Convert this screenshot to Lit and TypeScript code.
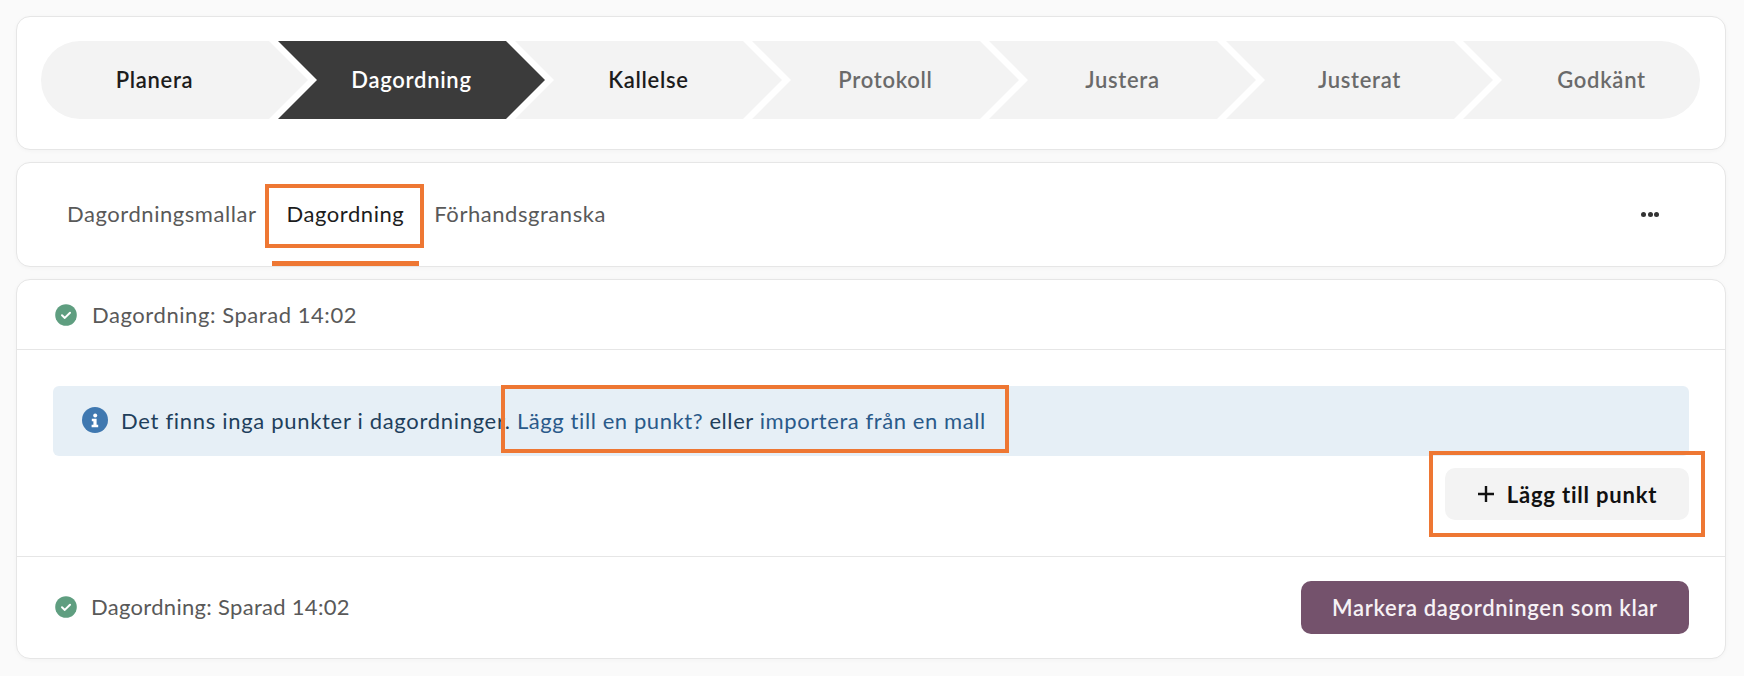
import { LitElement, html, css, svg } from "lit";
import { customElement } from "lit/decorators.js";
import { classMap } from "lit/directives/class-map.js";

const STEPS = [
  { label: "Planera", state: "done" },
  { label: "Dagordning", state: "active" },
  { label: "Kallelse", state: "done" },
  { label: "Protokoll", state: "todo" },
  { label: "Justera", state: "todo" },
  { label: "Justerat", state: "todo" },
  { label: "Godkänt", state: "todo" },
];

const checkIcon = svg`<svg class="check" viewBox="0 0 22 22" aria-hidden="true"><circle cx="11" cy="11" r="10.8" fill="#5f9e80"/><path d="M7 11.3l2.8 2.6 5.2-5.2" fill="none" stroke="#fff" stroke-width="2" stroke-linecap="round" stroke-linejoin="round"/></svg>`;

@customElement("app-root")
export class AppRoot extends LitElement {
  static styles = css`
    :host {
      display: flex;
      flex-direction: column;
      gap: 12px;
      box-sizing: border-box;
      width: 1744px;
      height: 676px;
      padding: 16px 18px 0 16px;
      background: #fafafa;
      font-family: "Lato", "Liberation Sans", sans-serif;
      font-size: 22px;
      color: #595959;
    }
    .card {
      box-sizing: border-box;
      flex: none;
      background: #fff;
      border: 1px solid #e6e6e6;
      border-radius: 14px;
      box-shadow: 0 1px 4px rgba(0, 0, 0, 0.03);
    }
    .steps-card {
      height: 134px;
      padding: 24px 25px 0 24px;
    }
    .steps {
      display: flex;
      height: 78px;
      border-radius: 39px;
      overflow: hidden;
    }
    .step {
      box-sizing: border-box;
      flex: 0 0 267px;
      margin-left: -30px;
      display: flex;
      align-items: center;
      justify-content: center;
      padding-bottom: 1px;
      background: #f3f3f3;
      font-weight: 600;
      letter-spacing: 0.7px;
      clip-path: polygon(0 0, calc(100% - 39px) 0, 100% 50%, calc(100% - 39px) 100%, 0 100%, 39px 50%);
    }
    .step:first-child {
      margin-left: 0;
      padding-right: 40px;
      clip-path: polygon(0 0, calc(100% - 39px) 0, 100% 50%, calc(100% - 39px) 100%, 0 100%);
    }
    .step:last-child {
      flex-basis: 237px;
      padding-left: 40px;
      clip-path: polygon(0 0, 100% 0, 100% 100%, 0 100%, 39px 50%);
    }
    .done { color: #1c1c1c; }
    .todo { color: #6a6a6a; }
    .active { background: #3b3b3b; color: #fff; }

    .tabs-card {
      height: 105px;
      display: flex;
      align-items: stretch;
      padding-left: 35px;
      padding-right: 66px;
    }
    .tab {
      position: relative;
      display: flex;
      align-items: center;
      padding: 0 15px 2px;
      letter-spacing: 0.55px;
    }
    .tab.current { color: #1c1c1c; }
    .tab.current::after {
      content: "";
      position: absolute;
      left: 0;
      right: 0;
      bottom: 0;
      height: 5px;
      background: #ee7733;
    }
    .note {
      position: absolute;
      box-sizing: border-box;
      border: 4px solid #ee7733;
      pointer-events: none;
    }
    .note-tab { left: -7px; right: -5px; top: 21px; height: 64px; }
    .dots {
      margin-left: auto;
      align-self: center;
      display: flex;
      gap: 1.5px;
      margin-bottom: 1px;
    }
    .dots i {
      width: 5px;
      height: 5px;
      border-radius: 50%;
      background: #333;
    }

    .main-card {
      height: 380px;
      display: flex;
      flex-direction: column;
    }
    .status {
      box-sizing: border-box;
      height: 70px;
      display: flex;
      align-items: center;
      gap: 15px;
      padding-left: 38px;
      border-bottom: 1px solid #e6e6e6;
      letter-spacing: 0.56px;
      flex: none;
    }
    .check { width: 22px; height: 22px; flex: none; }
    .body {
      height: 207px;
      box-sizing: border-box;
      padding: 36px 36px 0 36px;
      display: flex;
      flex-direction: column;
      border-bottom: 1px solid #e6e6e6;
      flex: none;
    }
    .alert {
      position: relative;
      box-sizing: border-box;
      height: 70px;
      flex: none;
      display: flex;
      align-items: center;
      gap: 13px;
      padding: 0 0 2px 29px;
      background: #e6eff6;
      border-radius: 6px;
      color: #1f3f5c;
      letter-spacing: 0.58px;
    }
    .lead { letter-spacing: 0.69px; }
    .alert a { color: #2a5a8a; text-decoration: none; }
    .info { width: 26px; height: 26px; flex: none; }
    .note-alert { left: 448px; top: -1px; width: 508px; height: 68px; }
    .add-wrap {
      position: relative;
      align-self: flex-end;
      margin-top: 12px;
    }
    .add {
      box-sizing: border-box;
      width: 244px;
      height: 52px;
      display: flex;
      align-items: center;
      justify-content: center;
      gap: 12px;
      border: 0;
      border-radius: 10px;
      background: #f3f3f3;
      color: #111;
      font: inherit;
      font-weight: 700;
      letter-spacing: 0.8px;
    }
    .plus { width: 18px; height: 18px; }
    .note-add { left: -16px; right: -16px; top: -17px; bottom: -17px; }
    .foot {
      flex: 1;
      display: flex;
      align-items: center;
      justify-content: space-between;
      padding: 0 36px 0 38px;
    }
    .foot-status {
      display: flex;
      align-items: center;
      gap: 14px;
      margin-bottom: 2px;
      letter-spacing: 0.3px;
    }
    .submit {
      width: 388px;
      height: 53px;
      border: 0;
      border-radius: 10px;
      background: #74526c;
      color: #f6f1f5;
      font: inherit;
      font-weight: 600;
      letter-spacing: 0.65px;
    }
  `;

  render() {
    return html`
      <section class="card steps-card">
        <div class="steps">
          ${STEPS.map(
            (s) => html`<div class=${classMap({ step: true, [s.state]: true })}>${s.label}</div>`
          )}
        </div>
      </section>

      <nav class="card tabs-card">
        <div class="tab">Dagordningsmallar</div>
        <div class="tab current">Dagordning<span class="note note-tab"></span></div>
        <div class="tab">Förhandsgranska</div>
        <div class="dots"><i></i><i></i><i></i></div>
      </nav>

      <section class="card main-card">
        <div class="status">${checkIcon}<span>Dagordning: Sparad 14:02</span></div>
        <div class="body">
          <div class="alert">
            <svg class="info" viewBox="0 0 26 26" aria-hidden="true">
              <circle cx="13" cy="13" r="13" fill="#3f78b0" />
              <circle cx="13.2" cy="8.6" r="2" fill="#fff" />
              <path d="M9.8 11.8h4.8v6h1.6v2.4H9.6v-2.4h1.8v-3.6H9.8z" fill="#fff" />
            </svg>
            <span><span class="lead">Det finns inga punkter i dagordninger. </span><a>Lägg till en punkt?</a> eller <a>importera från en mall</a></span>
            <span class="note note-alert"></span>
          </div>
          <div class="add-wrap">
            <button class="add">
              <svg class="plus" viewBox="0 0 18 18" aria-hidden="true">
                <path d="M9 1v16M1 9h16" stroke="#111" stroke-width="2.4" fill="none" />
              </svg>
              Lägg till punkt
            </button>
            <span class="note note-add"></span>
          </div>
        </div>
        <div class="foot">
          <div class="foot-status">${checkIcon}<span>Dagordning: Sparad 14:02</span></div>
          <button class="submit">Markera dagordningen som klar</button>
        </div>
      </section>
    `;
  }
}
